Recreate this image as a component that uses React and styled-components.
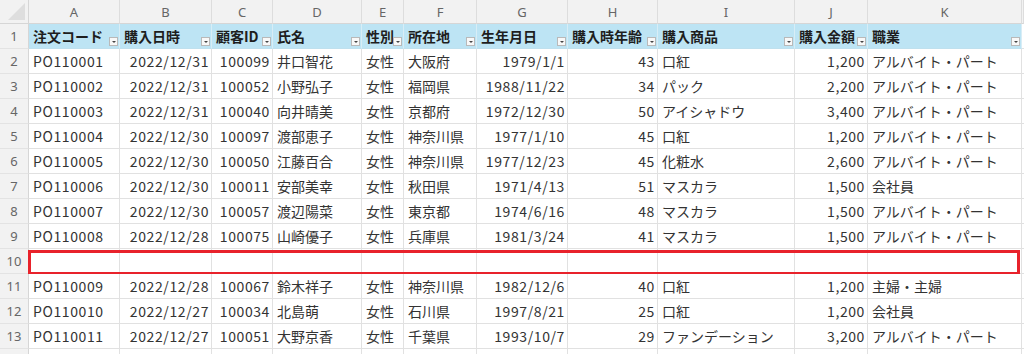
import React from "react";
import styled, { createGlobalStyle } from "styled-components";

const Global = createGlobalStyle`
  html, body { margin: 0; padding: 0; background: #ffffff; }
  body { overflow: hidden; font-family: "Noto Sans CJK JP", "Noto Sans", sans-serif; }
`;

const COLS = "29px 91px 92px 61px 89px 42px 73px 91px 90px 137px 73px 154px 1fr";

const Sheet = styled.div`
  width: 1024px;
  height: 354px;
  overflow: hidden;
  background: #fff;
`;

const Row = styled.div`
  position: relative;
  display: grid;
  grid-template-columns: ${COLS};
  height: ${(p) => (p.$head ? 24 : 25)}px;
`;

const Corner = styled.div`
  position: relative;
  background: #f2f2f2;
  border-right: 1px solid #d6d6d6;
  border-bottom: 1px solid #d6d6d6;
  &::after {
    content: "";
    position: absolute;
    right: 3px;
    bottom: 3px;
    width: 0;
    height: 0;
    border-left: 17px solid transparent;
    border-bottom: 17px solid #dedede;
  }
`;

const ColLetter = styled.div`
  background: #f2f2f2;
  border-right: 1px solid #dddddd;
  border-bottom: 1px solid #d6d6d6;
  color: #666;
  font-size: 13px;
  display: flex;
  align-items: center;
  justify-content: center;
  font-family: "Noto Sans", sans-serif;
`;

const RowNum = styled.div`
  background: #f2f2f2;
  border-right: 1px solid #d6d6d6;
  border-bottom: 1px solid #e3e3e3;
  color: #666;
  font-size: 13px;
  display: flex;
  align-items: center;
  justify-content: center;
  font-family: "Noto Sans", sans-serif;
`;

const Cell = styled.div`
  position: relative;
  box-sizing: border-box;
  border-right: 1px solid ${(p) => (p.$head ? "#d8edf6" : "#e1e1e1")};
  border-bottom: 1px solid ${(p) => (p.$head ? "#bfe0ee" : "#e1e1e1")};
  background: ${(p) => (p.$head ? "#bde4f4" : "#ffffff")};
  color: ${(p) => (p.$head ? "#1e1e1e" : "#333333")};
  font-weight: ${(p) => (p.$head ? 700 : 400)};
  font-size: 14px;
  line-height: 24px;
  letter-spacing: ${(p) => (p.$num ? "0.6px" : "0")};
  padding: 0 4px 0 4px;
  white-space: nowrap;
  overflow: visible;
  text-align: ${(p) => (p.$right ? "right" : "left")};
  padding-right: ${(p) => (p.$right ? "2px" : "4px")};
  font-family: "Noto Sans CJK JP", "Noto Sans", sans-serif;
`;

const FilterBtn = styled.span`
  position: absolute;
  right: 1px;
  bottom: 2px;
  width: 9px;
  height: 9px;
  box-sizing: border-box;
  background: #f8f8f8;
  border: 1px solid #b9b9b9;
  display: flex;
  align-items: center;
  justify-content: center;
  &::after {
    content: "";
    width: 0;
    height: 0;
    margin-top: 1px;
    border-left: 2px solid transparent;
    border-right: 2px solid transparent;
    border-top: 2px solid #444;
  }
`;

const Highlight = styled.div`
  position: absolute;
  left: 28px;
  top: 1px;
  width: 992px;
  height: 25px;
  box-sizing: border-box;
  border: 3px solid #e8222b;
  pointer-events: none;
`;

const letters = ["A", "B", "C", "D", "E", "F", "G", "H", "I", "J", "K", ""];
const right = [false, true, true, false, false, false, true, true, false, true, false, false];
const num = [true, true, true, false, false, false, true, true, false, true, false, false];

const header = ["注文コード", "購入日時", "顧客ID", "氏名", "性別", "所在地", "生年月日", "購入時年齢", "購入商品", "購入金額", "職業"];

const data = [
  ["PO110001", "2022/12/31", "100099", "井口智花", "女性", "大阪府", "1979/1/1", "43", "口紅", "1,200", "アルバイト・パート"],
  ["PO110002", "2022/12/31", "100052", "小野弘子", "女性", "福岡県", "1988/11/22", "34", "パック", "2,200", "アルバイト・パート"],
  ["PO110003", "2022/12/31", "100040", "向井晴美", "女性", "京都府", "1972/12/30", "50", "アイシャドウ", "3,400", "アルバイト・パート"],
  ["PO110004", "2022/12/30", "100097", "渡部恵子", "女性", "神奈川県", "1977/1/10", "45", "口紅", "1,200", "アルバイト・パート"],
  ["PO110005", "2022/12/30", "100050", "江藤百合", "女性", "神奈川県", "1977/12/23", "45", "化粧水", "2,600", "アルバイト・パート"],
  ["PO110006", "2022/12/30", "100011", "安部美幸", "女性", "秋田県", "1971/4/13", "51", "マスカラ", "1,500", "会社員"],
  ["PO110007", "2022/12/30", "100057", "渡辺陽菜", "女性", "東京都", "1974/6/16", "48", "マスカラ", "1,500", "アルバイト・パート"],
  ["PO110008", "2022/12/28", "100075", "山崎優子", "女性", "兵庫県", "1981/3/24", "41", "マスカラ", "1,500", "アルバイト・パート"],
  null,
  ["PO110009", "2022/12/28", "100067", "鈴木祥子", "女性", "神奈川県", "1982/12/6", "40", "口紅", "1,200", "主婦・主婦"],
  ["PO110010", "2022/12/27", "100034", "北島萌", "女性", "石川県", "1997/8/21", "25", "口紅", "1,200", "会社員"],
  ["PO110011", "2022/12/27", "100051", "大野京香", "女性", "千葉県", "1993/10/7", "29", "ファンデーション", "3,200", "アルバイト・パート"],
  undefined,
];

export default function App() {
  return (
    <>
      <Global />
      <Sheet>
        <Row $head>
          <Corner />
          {letters.map((l, i) => (
            <ColLetter key={i}>{l}</ColLetter>
          ))}
        </Row>
        <Row>
          <RowNum>1</RowNum>
          {header.map((h, i) => (
            <Cell key={i} $head>
              {h}
              <FilterBtn />
            </Cell>
          ))}
          <Cell />
        </Row>
        {data.map((r, ri) => (
          <Row key={ri}>
            <RowNum>{r === undefined ? "" : ri + 2}</RowNum>
            {Array.from({ length: 12 }).map((_, ci) => (
              <Cell key={ci} $right={right[ci]} $num={num[ci]}>
                {r && ci < 11 ? r[ci] : ""}
              </Cell>
            ))}
            {r === null && <Highlight />}
          </Row>
        ))}
      </Sheet>
    </>
  );
}
